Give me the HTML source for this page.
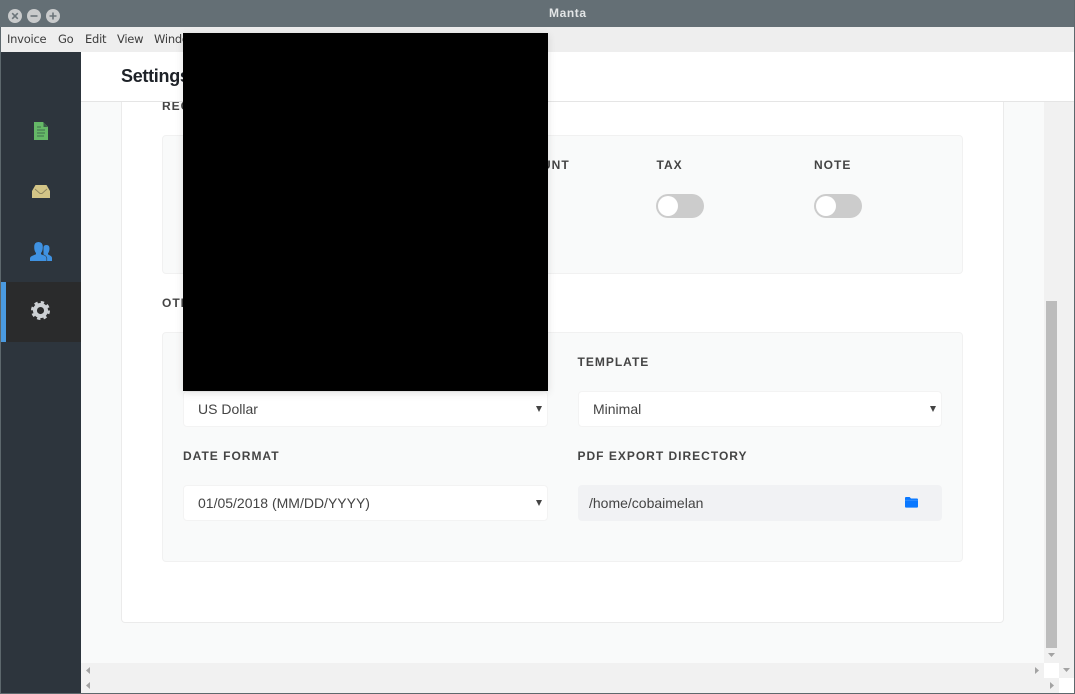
<!DOCTYPE html>
<html>
<head>
<meta charset="utf-8">
<style>
html,body{margin:0;padding:0;width:1075px;height:694px;overflow:hidden;background:#fff;font-family:"Liberation Sans",sans-serif}
div,span,svg{position:absolute;box-sizing:border-box}
.t{white-space:nowrap}
.m{top:27px;height:25px;line-height:25px;color:#3c3c3c;font-family:"DejaVu Sans",sans-serif;font-size:11.5px;letter-spacing:-.25px}
.l{font-size:12px;font-weight:bold;letter-spacing:1px;color:#444;line-height:14px;white-space:nowrap}
.p{background:#f9fafa;border:1px solid #f1f1f1;border-radius:4px}
.s{background:#fff;border:1px solid #f3f3f3;border-radius:4px;height:36px;font-size:14px;line-height:34px;color:#444;padding-left:14px;white-space:nowrap}
.a{width:0;height:0;border-left:3px solid transparent;border-right:3px solid transparent;border-top:6px solid #444}
.tg{width:48px;height:24px;border-radius:12px;background:#ccc;top:194px}
.tg i{position:absolute;left:2px;top:2px;width:20px;height:20px;border-radius:50%;background:#fff;display:block}
</style>
</head>
<body>
<!-- title bar -->
<div style="left:0;top:0;width:1075px;height:27px;background:#646f75"></div>
<svg style="left:0;top:0" width="70" height="27" viewBox="0 0 70 27">
<circle cx="15" cy="16" r="7" fill="#c9cbcc"/><path d="M12.2 13.2l5.6 5.6M17.8 13.2l-5.6 5.6" stroke="#6b7479" stroke-width="1.6"/>
<circle cx="34" cy="16" r="7" fill="#c9cbcc"/><path d="M30.5 16h7" stroke="#6b7479" stroke-width="1.6"/>
<circle cx="53" cy="16" r="7" fill="#c9cbcc"/><path d="M49.5 16h7M53 12.500v7" stroke="#6b7479" stroke-width="1.6"/>
</svg>
<div class="t" style="left:549px;top:6px;font-size:12px;font-weight:bold;letter-spacing:.6px;line-height:14px;color:#e2e5e6">Manta</div>
<!-- menu -->
<div style="left:0;top:27px;width:1075px;height:25px;background:#eeeeee"></div>
<div class="m t" style="left:7px">Invoice</div>
<div class="m t" style="left:58px">Go</div>
<div class="m t" style="left:85px">Edit</div>
<div class="m t" style="left:117px">View</div>
<div class="m t" style="left:154px">Window</div>
<!-- header -->
<div style="left:81px;top:52px;width:993px;height:50px;background:#fff;border-bottom:1px solid #e5e5e5"></div>
<div class="t" style="left:121px;top:65px;font-size:18px;font-weight:bold;letter-spacing:-.3px;line-height:22px;color:#1e2228">Settings</div>
<!-- content -->
<div style="left:81px;top:102px;width:963px;height:561px;background:#f9fafa;overflow:hidden">
  <div style="left:40px;top:-20px;width:883px;height:541px;background:#fff;border:1px solid #ebebeb;border-radius:4px"></div>
  <div class="l" style="left:81px;top:-3px">RECEIPT</div>
  <div class="p" style="left:81px;top:33px;width:801px;height:139px"></div>
  <div class="l" style="left:81px;top:194px">OTHERS</div>
  <div class="p" style="left:81px;top:230px;width:801px;height:230px"></div>
</div>
<div class="l" style="left:499px;top:158px">DISCOUNT</div>
<div class="l" style="left:656.500px;top:158px">TAX</div>
<div class="l" style="left:814px;top:158px">NOTE</div>
<div class="tg" style="left:656px"><i></i></div>
<div class="tg" style="left:814px"><i></i></div>
<div class="l" style="left:577.500px;top:355px">TEMPLATE</div>
<div class="s" style="left:183px;top:391px;width:365px">US Dollar</div>
<div class="a" style="left:536px;top:406px"></div>
<div class="s" style="left:578px;top:391px;width:364px">Minimal</div>
<div class="a" style="left:930px;top:406px"></div>
<div class="l" style="left:183px;top:449px">DATE FORMAT</div>
<div class="l" style="left:577.500px;top:449px">PDF EXPORT DIRECTORY</div>
<div class="s" style="left:183px;top:485px;width:365px">01/05/2018 (MM/DD/YYYY)</div>
<div class="a" style="left:536px;top:500px"></div>
<div class="s" style="left:578px;top:485px;width:364px;background:#f1f2f4;border-color:#f1f2f4;padding-left:10px">/home/cobaimelan</div>
<svg style="left:905px;top:497px" width="13" height="11" viewBox="0 0 13 11"><path d="M0 1Q0 0 1 0H4.600L6 1.500H12Q13 1.500 13 2.500V9.600Q13 10.600 12 10.600H1Q0 10.600 0 9.600Z" fill="#0a78ff"/><path d="M0 3.200H13" stroke="#4a9cff" stroke-width=".6"/></svg>
<!-- sidebar -->
<div style="left:1px;top:52px;width:80px;height:641px;background:#2d353d"></div>
<div style="left:1px;top:282px;width:80px;height:60px;background:#2a2b2c"></div>
<div style="left:1px;top:282px;width:5px;height:60px;background:#4a9ae0"></div>
<svg style="left:34px;top:122px" width="14" height="18" viewBox="0 0 14 18"><path d="M0 0H9L14 5V18H0Z" fill="#65b867"/><path d="M9.500 .5L13.500 5H9.500Z" fill="#3a5a48"/><path d="M3 5H7M3 8H11M3 11H11M3 14H10" stroke="#3f6e4c" stroke-width=".9"/></svg>
<svg style="left:32px;top:185px" width="18" height="13" viewBox="0 0 18 13"><path d="M3.500 0H14.500L18 6V13H0V6Z" fill="#d3c587"/><path d="M3 4L8 8.500H10L15 4" stroke="#8f8760" stroke-width=".9" fill="none"/></svg>
<svg style="left:30px;top:242px" width="22" height="19" viewBox="0 0 22 19"><path d="M13.500 19V5.500Q13.500 3 16.500 3T19.500 6.500Q19.500 9.500 18 11.300V12.400L20 13.500Q22 14.500 22 16V19Z" fill="#3f92e2"/><path d="M0 19V16.500Q0 14.500 3 13.500L6 12.300V11Q4.200 9 4.200 5Q4.200 0 8.500 0T12.800 5Q12.800 9 11 11V12.300L14 13.500Q16 14.300 16.500 16V19Z" fill="#3f92e2"/><path d="M16.800 19V16Q16.300 14 14 13L11.500 12" stroke="#2d353d" stroke-width=".6" fill="none"/></svg>
<svg style="left:31px;top:301px" width="19" height="19" viewBox="0 0 24 24"><circle cx="12" cy="12" r="7" fill="none" stroke="#ccd0d4" stroke-width="5"/><circle cx="12" cy="12" r="10.500" fill="none" stroke="#ccd0d4" stroke-width="3" stroke-dasharray="4.250 4"/></svg>
<!-- scrollbars -->
<div style="left:1044px;top:102px;width:15px;height:561px;background:#f1f1f1"></div>
<div style="left:1046px;top:301px;width:11px;height:347px;background:#bcbcbc"></div>
<svg style="left:1048px;top:653px" width="7" height="4"><path d="M0 0H7L3.500 4Z" fill="#a3a3a3"/></svg>
<div style="left:1059px;top:102px;width:15px;height:576px;background:#f1f1f1"></div>
<svg style="left:1063px;top:668px" width="7" height="4"><path d="M0 0H7L3.500 4Z" fill="#a3a3a3"/></svg>
<div style="left:81px;top:663px;width:963px;height:15px;background:#f1f1f1"></div>
<div style="left:1044px;top:663px;width:15px;height:15px;background:#fff"></div>
<svg style="left:86px;top:667px" width="4" height="7"><path d="M4 0V7L0 3.500Z" fill="#a3a3a3"/></svg>
<svg style="left:1035px;top:667px" width="4" height="7"><path d="M0 0V7L4 3.500Z" fill="#a3a3a3"/></svg>
<div style="left:81px;top:678px;width:978px;height:15px;background:#f1f1f1"></div>
<div style="left:1059px;top:678px;width:15px;height:15px;background:#fff"></div>
<svg style="left:86px;top:682px" width="4" height="7"><path d="M4 0V7L0 3.500Z" fill="#a3a3a3"/></svg>
<svg style="left:1050px;top:682px" width="4" height="7"><path d="M0 0V7L4 3.500Z" fill="#a3a3a3"/></svg>
<!-- window borders -->
<div style="left:0;top:27px;width:1px;height:667px;background:#5d686d"></div>
<div style="left:1074px;top:0;width:1px;height:694px;background:#5d686d"></div>
<div style="left:0;top:693px;width:1075px;height:1px;background:#5d686d"></div>
<!-- black redaction -->
<div style="left:183px;top:33px;width:365px;height:358px;background:#000;box-shadow:0 2px 8px rgba(0,0,0,.12)"></div>
</body>
</html>
